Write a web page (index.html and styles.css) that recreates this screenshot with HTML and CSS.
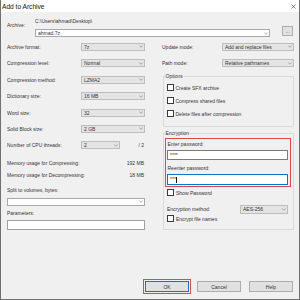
FILE: index.html
```html
<!DOCTYPE html>
<html>
<head>
<meta charset="utf-8">
<link rel="stylesheet" href="styles.css">
</head>
<body>
<div class="window">
  <div class="titlebar">
    <span>Add to Archive</span>
    <svg class="close" width="5" height="5" viewBox="0 0 5 5"><path d="M0.5 0.5L4.5 4.5M4.5 0.5L0.5 4.5" stroke="#333" stroke-width="0.6"/></svg>
  </div>
  <div class="content">
    <div class="archive">
      <span class="archive-label">Archive:</span>
      <div class="archive-main">
        <div class="path">C:\Users\ahmad\Desktop\</div>
        <div class="archive-row">
          <div class="combo edit archive-combo"><span>ahmad.7z</span><svg class="chev" width="4" height="3" viewBox="0 0 4 3"><path d="M0.4 0.7L2 2.2L3.6 0.7" fill="none" stroke="#777" stroke-width="0.6"/></svg></div>
          <div class="btn browse">...</div>
        </div>
      </div>
    </div>

    <div class="columns">
      <div class="col left">
        <div class="row"><span class="lbl">Archive format:</span><div class="combo"><span>7z</span><svg class="chev" width="4" height="3" viewBox="0 0 4 3"><path d="M0.4 0.7L2 2.2L3.6 0.7" fill="none" stroke="#777" stroke-width="0.6"/></svg></div></div>
        <div class="row"><span class="lbl">Compression level:</span><div class="combo"><span>Normal</span><svg class="chev" width="4" height="3" viewBox="0 0 4 3"><path d="M0.4 0.7L2 2.2L3.6 0.7" fill="none" stroke="#777" stroke-width="0.6"/></svg></div></div>
        <div class="row"><span class="lbl">Compression method:</span><div class="combo"><span>LZMA2</span><svg class="chev" width="4" height="3" viewBox="0 0 4 3"><path d="M0.4 0.7L2 2.2L3.6 0.7" fill="none" stroke="#777" stroke-width="0.6"/></svg></div></div>
        <div class="row"><span class="lbl">Dictionary size:</span><div class="combo"><span>16 MB</span><svg class="chev" width="4" height="3" viewBox="0 0 4 3"><path d="M0.4 0.7L2 2.2L3.6 0.7" fill="none" stroke="#777" stroke-width="0.6"/></svg></div></div>
        <div class="row"><span class="lbl">Word size:</span><div class="combo"><span>32</span><svg class="chev" width="4" height="3" viewBox="0 0 4 3"><path d="M0.4 0.7L2 2.2L3.6 0.7" fill="none" stroke="#777" stroke-width="0.6"/></svg></div></div>
        <div class="row"><span class="lbl">Solid Block size:</span><div class="combo"><span>2 GB</span><svg class="chev" width="4" height="3" viewBox="0 0 4 3"><path d="M0.4 0.7L2 2.2L3.6 0.7" fill="none" stroke="#777" stroke-width="0.6"/></svg></div></div>
        <div class="row"><span class="lbl">Number of CPU threads:</span><div class="combo small"><span>2</span><svg class="chev" width="4" height="3" viewBox="0 0 4 3"><path d="M0.4 0.7L2 2.2L3.6 0.7" fill="none" stroke="#777" stroke-width="0.6"/></svg></div><span class="of">/ 2</span></div>
        <div class="mem first"><span>Memory usage for Compressing:</span><span>192 MB</span></div>
        <div class="mem"><span>Memory usage for Decompressing:</span><span>18 MB</span></div>
        <div class="field-label split-label">Split to volumes, bytes:</div>
        <div class="combo edit wide"><span></span><svg class="chev" width="4" height="3" viewBox="0 0 4 3"><path d="M0.4 0.7L2 2.2L3.6 0.7" fill="none" stroke="#777" stroke-width="0.6"/></svg></div>
        <div class="field-label params-label">Parameters:</div>
        <div class="input params"></div>
      </div>

      <div class="col right">
        <div class="row"><span class="lbl">Update mode:</span><div class="combo"><span>Add and replace files</span><svg class="chev" width="4" height="3" viewBox="0 0 4 3"><path d="M0.4 0.7L2 2.2L3.6 0.7" fill="none" stroke="#777" stroke-width="0.6"/></svg></div></div>
        <div class="row"><span class="lbl">Path mode:</span><div class="combo"><span>Relative pathnames</span><svg class="chev" width="4" height="3" viewBox="0 0 4 3"><path d="M0.4 0.7L2 2.2L3.6 0.7" fill="none" stroke="#777" stroke-width="0.6"/></svg></div></div>

        <fieldset class="group options">
          <legend>Options</legend>
          <div class="check"><span class="box"></span>Create SFX archive</div>
          <div class="check"><span class="box"></span>Compress shared files</div>
          <div class="check"><span class="box"></span>Delete files after compression</div>
        </fieldset>

        <fieldset class="group encryption">
          <legend>Encryption</legend>
          <div class="highlight">
            <div class="field-label">Enter password:</div>
            <div class="input pw">****</div>
            <div class="field-label second">Reenter password:</div>
            <div class="input pw focus">***<span class="caret"></span></div>
          </div>
          <div class="check show">
            <span class="box"></span>Show Password</div>
          <div class="enc-row"><span>Encryption method:</span><div class="combo aes"><span>AES-256</span><svg class="chev" width="4" height="3" viewBox="0 0 4 3"><path d="M0.4 0.7L2 2.2L3.6 0.7" fill="none" stroke="#777" stroke-width="0.6"/></svg></div></div>
          <div class="check names"><span class="box"></span>Encrypt file names</div>
        </fieldset>
      </div>
    </div>

    <div class="buttons">
      <div class="btn action ok">OK</div>
      <div class="btn action">Cancel</div>
      <div class="btn action">Help</div>
    </div>
  </div>
</div>
</body>
</html>
```

FILE: styles.css
```css
* { box-sizing: border-box; }
html, body { margin: 0; padding: 0; background: #f0f0f0; }
body {
  font-family: "Liberation Sans", Arial, sans-serif;
  font-size: 5px;
  color: #333333;
}
.window {
  width: 300px;
  height: 300px;
  border: 1px solid #707070;
  border-top: 0;
  background: #f0f0f0;
  display: flex;
  flex-direction: column;
}
.titlebar {
  height: 12px;
  flex: none;
  background: #ffffff;
  display: flex;
  align-items: center;
  justify-content: space-between;
  padding: 0 3.5px 0 1px;
  font-size: 6.6px;
  color: #111;
}
.content {
  flex: 1;
  display: flex;
  flex-direction: column;
  padding: 0 4px 7px 6px;
}
.archive { display: flex; padding-top: 5.5px; }
.archive-label { width: 28px; margin-top: 4px; line-height: 7px; flex: none; }
.archive-main { flex: 1; }
.path { line-height: 7px; }
.archive-row { display: flex; margin-top: 1.5px; height: 11px; }
.combo {
  height: 8px;
  display: flex;
  align-items: center;
  justify-content: space-between;
  padding: 0 1.5px 0 2px;
  background: #e4e4e4;
  border: 1px solid #bdbdbd;
  white-space: nowrap;
  flex: none;
}
.combo.edit { background: #ffffff; border-color: #a8a8a8; }
.archive-combo { width: 235px; align-self: flex-end; }
.btn {
  background: #e1e1e1;
  border: 1px solid #adadad;
  display: flex;
  align-items: center;
  justify-content: center;
}
.browse { width: 11px; height: 10px; margin-left: 12px; color: #555; }

.columns { display: flex; gap: 17px; margin-top: 1.8px; }
.col.left { width: 138px; flex: none; }
.col.right { width: 132px; flex: none; }
.row { height: 16.4px; display: flex; align-items: center; white-space: nowrap; }
.left .lbl { width: 74px; flex: none; }
.left .combo { width: 64px; }
.left .combo.small { width: 39px; }
.of { margin-left: auto; margin-right: 1px; }
.right .lbl { width: 60px; flex: none; }
.right .combo { width: 72px; }

.mem {
  height: 12px;
  display: flex;
  align-items: center;
  justify-content: space-between;
  padding-right: 1px;
  white-space: nowrap;
}
.mem.first { margin-top: 3.9px; }
.field-label { line-height: 7px; white-space: nowrap; }
.split-label { margin-top: 6px; }
.combo.wide { width: 138px; margin-top: 3.5px; }
.params-label { margin-top: 4.5px; }
.input { background: #ffffff; border: 1px solid #a0a0a0; }
.params { margin-top: 2.5px; height: 10.5px; width: 138px; }

.group {
  margin: 0;
  min-width: 0;
  border: 1px solid #dadada;
  margin-left: 0.5px;
}
.group legend {
  padding: 0 1px;
  line-height: 7px;
  margin-left: -2px;
}
.options { margin-top: 1.9px; padding: 1px 0 6px 3px; }
.check {
  height: 13px;
  display: flex;
  align-items: center;
  white-space: nowrap;
}
.box {
  width: 7px;
  height: 7px;
  background: #fff;
  border: 1px solid #3a3a3a;
  margin-right: 2px;
  flex: none;
}
.encryption { margin-top: 3px; padding: 0 2px 6px 1px; }
.encryption legend { margin-left: 0; }
.highlight {
  margin-top: 0.5px;
  border: 1.5px solid #e04848;
  padding: 2px 2.5px 1px 1px;
}
.highlight .field-label { padding-left: 1px; }
.highlight .second { margin-top: 4.5px; }
.pw {
  margin-top: 2.5px;
  height: 10px;
  border-color: #7a7a7a;
  padding: 1px 0 0 2.5px;
  font-size: 5px;
  line-height: 6px;
  color: #333;
  display: flex;
  align-items: flex-start;
}
.pw.focus { height: 10.5px; border-color: #0078d7; }
.caret { display: inline-block; width: 0.6px; height: 6px; background: #111; margin-left: 0.5px; margin-top: 0.5px; }
.check.show { height: 12px; padding-left: 2.5px; }
.enc-row {
  margin-top: 5px;
  height: 11px;
  display: flex;
  align-items: center;
  padding-left: 2.5px;
  padding-right: 3px;
  white-space: nowrap;
}
.combo.aes { width: 48px; height: 9px; margin-left: auto; }
.check.names { height: 8px; padding-left: 2.5px; }

.buttons {
  margin-top: auto;
  display: flex;
  justify-content: flex-end;
  gap: 8px;
  padding-right: 2px;
}
.action { width: 44px; height: 11px; }
.ok {
  border-color: #0078d7;
  outline: 1.5px solid #e04848;
  outline-offset: 1px;
}
```
